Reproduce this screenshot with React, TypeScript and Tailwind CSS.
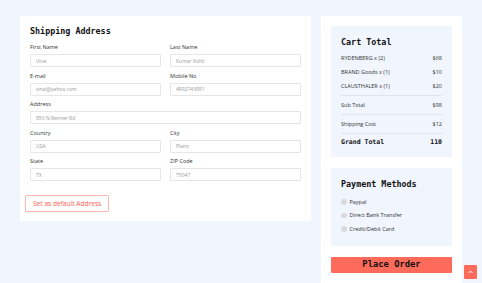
import React from "react";

const fields = [
  [
    { label: "First Name", value: "Virat" },
    { label: "Last Name", value: "Kumar Kohli" },
  ],
  [
    { label: "E-mail", value: "virat@yahoo.com" },
    { label: "Mobile No", value: "4892743991" },
  ],
  [{ label: "Address", value: "850 N Renner Rd" }],
  [
    { label: "Country", value: "USA" },
    { label: "City", value: "Plano" },
  ],
  [
    { label: "State", value: "TX" },
    { label: "ZIP Code", value: "75047" },
  ],
];

const items = [
  { name: "RYDENBERG x (2)", price: "$68" },
  { name: "BRAND Goods x (1)", price: "$10" },
  { name: "CLAUSTHALER x (1)", price: "$20" },
];

const methods = ["Paypal", "Direct Bank Transfer", "Credit/Debit Card"];

const mono = "font-['DejaVu_Sans_Mono',monospace] font-bold text-[#111]";

function Field({ label, value }: { label: string; value: string }) {
  return (
    <div className="flex flex-col">
      <label className="text-[5.5px] leading-[8px] text-[#333] mb-[3px]">{label}</label>
      <input
        readOnly
        placeholder={value}
        className="h-[13px] w-full border border-[#e6e6e6] rounded-[1px] px-[5px] text-[5px] placeholder:text-[#999] outline-none bg-white"
      />
    </div>
  );
}

export default function App() {
  return (
    <div className="h-screen overflow-hidden bg-[#f0f5fe] font-['Open_Sans',sans-serif] relative">
      <div className="flex items-start gap-[10px] pt-[16px] pl-[20px] h-full">
        {/* Shipping address form */}
        <div className="w-[291px] bg-white px-[10px] pt-[10px] pb-[9px]">
          <h2 className={`${mono} text-[8.4px] leading-[11px] mb-[6px]`}>Shipping Address</h2>
          <div className="flex flex-col gap-[4.5px]">
            {fields.map((row, i) => (
              <div key={i} className={row.length === 2 ? "grid grid-cols-2 gap-[9px]" : ""}>
                {row.map((f) => (
                  <Field key={f.label} label={f.label} value={f.value} />
                ))}
              </div>
            ))}
          </div>
          <button className="-ml-[5px] mt-[14px] h-[17px] px-[7px] border border-[#ffb8b0] rounded-[1px] text-[#ff5e4e] text-[6.6px]">
            Set as default Address
          </button>
        </div>

        {/* Right column */}
        <div className="w-[141px] h-full bg-white p-[10px] flex flex-col">
          <div className="bg-[#f0f5fe] px-[10px] pt-[11px] pb-[6px]">
            <h3 className={`${mono} text-[8.4px] leading-[10px] mb-[4px]`}>Cart Total</h3>
            {items.map((it) => (
              <div key={it.name} className="flex justify-between items-center h-[14px] text-[5.5px] text-[#333]">
                <span>{it.name}</span>
                <span>{it.price}</span>
              </div>
            ))}
            <div className="mt-[2px] border-t border-[#dfe3ea] flex justify-between items-center h-[19px] text-[5.5px] text-[#333]">
              <span>Sub Total</span>
              <span>$98</span>
            </div>
            <div className="border-t border-[#dfe3ea] flex justify-between items-center h-[19px] text-[5.5px] text-[#333]">
              <span>Shipping Cost</span>
              <span>$12</span>
            </div>
            <div className={`border-t border-[#dfe3ea] flex justify-between items-center h-[18px] ${mono} text-[6.5px]`}>
              <span>Grand Total</span>
              <span>110</span>
            </div>
          </div>

          <div className="mt-[11px] bg-[#f0f5fe] px-[10px] pt-[11px] pb-[10px]">
            <h3 className={`${mono} text-[8.4px] leading-[10px] mb-[6px]`}>Payment Methods</h3>
            {methods.map((m) => (
              <div key={m} className="flex items-center gap-[3px] h-[13.5px] text-[5.5px] text-[#333]">
                <span className="block shrink-0 w-[5.5px] h-[5.5px] rounded-full bg-[#dadada]" />
                <span>{m}</span>
              </div>
            ))}
          </div>

          <button className={`mt-[11px] h-[17px] w-full bg-[#ff6b5b] rounded-[1px] ${mono} text-[8.8px]`}>
            Place Order
          </button>
        </div>
      </div>

      {/* Scroll to top */}
      <button className="absolute left-[464px] top-[265px] w-[13px] h-[14px] bg-[#ff6b5b] rounded-[1px] flex items-center justify-center">
        <svg width="5" height="4" viewBox="0 0 10 6" fill="none" stroke="white" strokeWidth="2">
          <path d="M1 5l4-4 4 4" />
        </svg>
      </button>
    </div>
  );
}
